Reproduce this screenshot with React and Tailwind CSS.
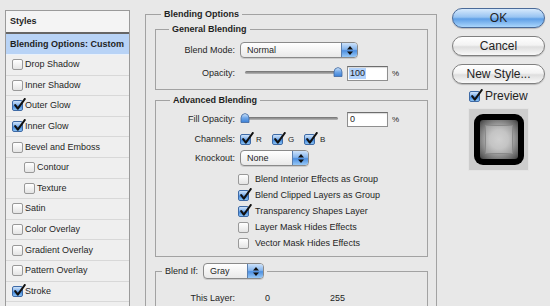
import React from 'react';

const styleRows = [
    { name: 'Drop Shadow', on: false },
    { name: 'Inner Shadow', on: false },
    { name: 'Outer Glow', on: true },
    { name: 'Inner Glow', on: true },
    { name: 'Bevel and Emboss', on: false },
    { name: 'Contour', on: false, indent: true },
    { name: 'Texture', on: false, indent: true },
    { name: 'Satin', on: false },
    { name: 'Color Overlay', on: false },
    { name: 'Gradient Overlay', on: false },
    { name: 'Pattern Overlay', on: false },
    { name: 'Stroke', on: true },
];

const advancedChecks = [
    { label: 'Blend Interior Effects as Group', on: false },
    { label: 'Blend Clipped Layers as Group', on: true },
    { label: 'Transparency Shapes Layer', on: true },
    { label: 'Layer Mask Hides Effects', on: false },
    { label: 'Vector Mask Hides Effects', on: false },
];

const Check = ({ on }) => (
    <span
        className={`relative inline-block shrink-0 w-[11px] h-[11px] rounded-[2px] border ${
            on
                ? 'border-[#3e6aa6] bg-[linear-gradient(to_bottom,#cfe3fa_0%,#7fb1ec_45%,#3f86dc_55%,#8cc3f5_100%)]'
                : 'border-[#999] bg-[linear-gradient(to_bottom,#ffffff,#e4e4e4)]'
        }`}
    >
        {on && (
            <svg className="absolute left-[0px] top-[-3px]" width="13" height="13" viewBox="0 0 13 13">
                <path d="M2.2 7.2 L4.8 10.6 L11.8 1" fill="none" stroke="#111" strokeWidth="2.1" strokeLinecap="round" strokeLinejoin="round" />
            </svg>
        )}
    </span>
);

const Stepper = () => (
    <span className="ml-auto w-[16px] h-full shrink-0 border-l border-[#5b7fae] bg-[linear-gradient(to_bottom,#cde2fa_0%,#86b6ee_45%,#4d8fe0_55%,#97c8f6_100%)] flex items-center justify-center">
        <svg width="6" height="9" viewBox="0 0 6 9">
            <path d="M3 0 L6 3.4 L0 3.4 Z M3 9 L6 5.6 L0 5.6 Z" fill="#111" />
        </svg>
    </span>
);

const Select = ({ value, width }) => (
    <div className={`${width} flex items-center h-[16px] rounded-[4px] border border-[#8a8a8a] bg-[linear-gradient(to_bottom,#ffffff,#e9e9e9)] overflow-hidden shadow-[0_1px_0_rgba(0,0,0,0.12)]`}>
        <span className="pl-[6px]">{value}</span>
        <Stepper />
    </div>
);

const Slider = ({ atEnd }) => (
    <div className="relative w-[103px] h-[16px] shrink-0">
        <div className="absolute left-[5px] right-[5px] top-[6px] h-[3px] rounded-full bg-[linear-gradient(to_bottom,#6f6f6f,#b9b9b9)]" />
        <svg className={`absolute top-[2px] ${atEnd ? 'left-[93px]' : 'left-[0px]'}`} width="10" height="10" viewBox="0 0 10 10">
            <defs>
                <linearGradient id={atEnd ? 'thumbA' : 'thumbB'} x1="0" y1="0" x2="0" y2="1">
                    <stop offset="0" stopColor="#d5e7fb" />
                    <stop offset="0.5" stopColor="#6ea6e8" />
                    <stop offset="1" stopColor="#3b7fd6" />
                </linearGradient>
            </defs>
            <path d="M1 9.5 V5 Q1 1 5 0.5 Q9 1 9 5 V9.5 Z" fill={`url(#${atEnd ? 'thumbA' : 'thumbB'})`} stroke="#41689f" strokeWidth="0.8" />
        </svg>
    </div>
);

const Field = ({ children }) => (
    <div className="ml-[4px] w-[41px] h-[15px] flex items-center pl-[1px] bg-white border border-[#8f8f8f] border-t-[#6d6d6d] shadow-[inset_0_1px_1px_rgba(0,0,0,0.15)]">
        {children}
    </div>
);

const Row = ({ label, className = '', children }) => (
    <div className={`flex items-center h-[16px] ${className}`}>
        <span className="w-[79px] text-right">{label}</span>
        <div className="ml-[5px] flex items-center">{children}</div>
    </div>
);

const AquaButton = ({ children, primary }) => (
    <div
        className={`h-[20px] flex items-center justify-center rounded-full border text-[12px] leading-none ${
            primary
                ? 'border-[#4a6a98] bg-[linear-gradient(to_bottom,#d6e9fc_0%,#98c4f2_45%,#5f9fe6_55%,#aad6fc_100%)]'
                : 'border-[#808080] bg-[linear-gradient(to_bottom,#ffffff_0%,#f3f3f3_45%,#dedede_55%,#f9f9f9_100%)]'
        } shadow-[0_1px_1px_rgba(0,0,0,0.2)]`}
    >
        {children}
    </div>
);

export default function App() {
    return (
        <div className="w-[550px] h-[306px] overflow-hidden bg-[#e8e8e8] flex items-start text-[9px] leading-[11px] text-[#1f1f1f] font-['Liberation_Sans',Arial,sans-serif]">
            {/* styles list */}
            <div className="ml-[5px] mt-[10px] w-[125px] h-[320px] shrink-0 border border-[#9a9a9a] bg-[#efefef]">
                <div className="h-[23px] flex items-center pl-[4px] font-bold bg-[#f4f4f4] border-b-2 border-[#666]">Styles</div>
                <div className="h-[21px] flex items-center pl-[4px] font-bold bg-[#b8d3f6] border-b border-[#e9f1fb]">
                    Blending Options: Custom
                </div>
                {styleRows.map(r => (
                    <div
                        key={r.name}
                        className={`h-[20.6px] flex items-center gap-[2px] border-b border-[#d8d8d8] ${r.indent ? 'pl-[18px]' : 'pl-[6px]'}`}
                    >
                        <Check on={r.on} />
                        <span>{r.name}</span>
                    </div>
                ))}
            </div>

            {/* blending options */}
            <fieldset className="ml-[15px] mt-[9px] w-[292px] h-[320px] shrink-0 border border-[#a2a2a2] pl-[9px] pr-[8px] pt-[4px]">
                <legend className="ml-[6px] px-[3px] font-bold">Blending Options</legend>

                <fieldset className="border border-[#a2a2a2] pt-[7px] pb-[8px]">
                    <legend className="ml-[13px] px-[3px] font-bold">General Blending</legend>
                    <Row label="Blend Mode:">
                        <Select value="Normal" width="w-[118px]" />
                    </Row>
                    <Row label="Opacity:" className="mt-[7px]">
                        <Slider atEnd />
                        <Field>
                            <span className="bg-[#b3d3fc] px-[1px]">100</span>
                        </Field>
                        <span className="ml-[4px] text-[8px]">%</span>
                    </Row>
                </fieldset>

                <fieldset className="mt-[5px] border border-[#a2a2a2] pt-[5px] pb-[5px]">
                    <legend className="ml-[14px] px-[3px] font-bold">Advanced Blending</legend>
                    <Row label="Fill Opacity:">
                        <Slider />
                        <Field>
                            <span className="px-[1px]">0</span>
                        </Field>
                        <span className="ml-[4px] text-[8px]">%</span>
                    </Row>
                    <Row label="Channels:" className="mt-[4px]">
                        {['R', 'G', 'B'].map(c => (
                            <span key={c} className="w-[32px] flex items-center">
                                <Check on />
                                <span className="ml-[5px] text-[8px]">{c}</span>
                            </span>
                        ))}
                    </Row>
                    <Row label="Knockout:" className="mt-[3px]">
                        <Select value="None" width="w-[69px]" />
                    </Row>
                    <div className="mt-[5px]">
                        {advancedChecks.map(c => (
                            <div key={c.label} className="h-[16px] flex items-center pl-[82px] gap-[6px]">
                                <Check on={c.on} />
                                <span>{c.label}</span>
                            </div>
                        ))}
                    </div>
                </fieldset>

                <fieldset className="mt-[6px] h-[80px] border border-[#a2a2a2] pt-[13px]">
                    <legend className="ml-[6px] px-[3px]">
                        <div className="flex items-center">
                            <span>Blend If:</span>
                            <span className="ml-[5px]">
                                <Select value="Gray" width="w-[61px]" />
                            </span>
                        </div>
                    </legend>
                    <div className="flex items-center h-[12px]">
                        <span className="w-[79px] text-right">This Layer:</span>
                        <span className="ml-[30px] w-[65px]">0</span>
                        <span>255</span>
                    </div>
                </fieldset>
            </fieldset>

            {/* buttons */}
            <div className="ml-[15px] mt-[8px] w-[93px] shrink-0 flex flex-col">
                <AquaButton primary>OK</AquaButton>
                <div className="mt-[8px]">
                    <AquaButton>Cancel</AquaButton>
                </div>
                <div className="mt-[8px]">
                    <AquaButton>New Style...</AquaButton>
                </div>
                <div className="mt-[6px] h-[12px] flex items-center pl-[17px] gap-[5px] text-[12px]">
                    <Check on />
                    <span>Preview</span>
                </div>
                <div className="mt-[6px] ml-[16px] w-[61px] h-[63px] bg-[#cdcdcd] border border-[#e4e4e4] flex items-center justify-center">
                    <div className="w-[50px] h-[51px] rounded-[9px] bg-black p-[6px]">
                        <div className="w-full h-full rounded-[3px] bg-[radial-gradient(circle,#d4d4d4_0%,#b8b8b8_40%,#6b6b6b_80%,#3c3c3c_100%)] p-[5px]">
                            <div className="w-full h-full border border-[#8a8a8a] bg-[radial-gradient(circle,#d0d0d0_0%,#c4c4c4_50%,#9a9a9a_100%)]" />
                        </div>
                    </div>
                </div>
            </div>
        </div>
    );
}
